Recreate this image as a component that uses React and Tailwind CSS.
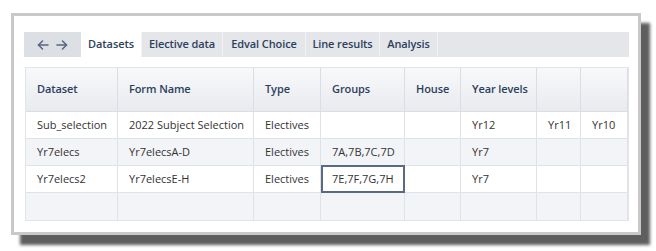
import React from "react";

const font = { fontFamily: '"Open Sans", "Noto Sans", sans-serif' };

const cols = ["Dataset", "Form Name", "Type", "Groups", "House", "Year levels", "", "", ""];
const rows = [
  ["Sub_selection", "2022 Subject Selection", "Electives", "", "", "Yr12", "Yr11", "Yr10", ""],
  ["Yr7elecs", "Yr7elecsA-D", "Electives", "7A,7B,7C,7D", "", "Yr7", "", "", ""],
  ["Yr7elecs2", "Yr7elecsE-H", "Electives", "7E,7F,7G,7H", "", "Yr7", "", "", ""],
  ["", "", "", "", "", "", "", "", ""],
];
const rowBg = ["bg-white", "bg-[#f3f4f7]", "bg-white", "bg-[#f3f4f7]"];

function Arrow({ dir }) {
  return (
    <svg width="12" height="10" viewBox="0 0 12 10" fill="none" stroke="#56657f" strokeWidth="1.5" strokeLinecap="round" strokeLinejoin="round">
      {dir === "left" ? (
        <>
          <path d="M11 5H1.5" />
          <path d="M5.5 1L1.5 5l4 4" />
        </>
      ) : (
        <>
          <path d="M1 5h9.5" />
          <path d="M6.5 1l4 4-4 4" />
        </>
      )}
    </svg>
  );
}

export default function App() {
  const tabs = [
    ["Datasets", "w-[61px]", true],
    ["Elective data", "w-[81px]", false],
    ["Edval Choice", "w-[83px]", false],
    ["Line results", "w-[74px]", false],
    ["Analysis", "w-[58px]", false],
  ];
  return (
    <div className="w-[656px] h-[251px] bg-white pl-[11px] pt-[13px]" style={font}>
      <div className="w-[630px] h-[222px] border-[3px] border-[#c9c9c9] bg-white shadow-[9px_10px_3px_rgba(40,40,40,0.75)] pl-[10px] pr-[9px] pt-[16px]">
        <div className="flex h-[25px] bg-[#e4e6ea]">
          <div className="w-[57px] bg-[#dcdfe4] flex items-center justify-center gap-[7px] pt-[1px]">
            <Arrow dir="left" />
            <Arrow dir="right" />
          </div>
          {tabs.map(([t, w, active]) => (
            <div
              key={t}
              className={`${w} flex items-center justify-center text-[11px] tracking-[-0.1px] font-semibold text-[#2e3f5c] border-r border-[#f0f1f4] ${active ? "bg-white" : ""}`}
            >
              {t}
            </div>
          ))}
        </div>
        <div className="mt-[10px] ml-[1px] border border-[#e2e5ea] w-[604px]">
          <div className="grid grid-cols-[92px_136px_67px_84px_56px_76px_44px_47px_1px] h-[44px] bg-gradient-to-b from-[#f8f9fb] to-[#e8eaee] border-b border-[#dadde3]">
            {cols.map((c, i) => (
              <div key={i} className="flex items-center pl-[11px] text-[11px] tracking-[-0.1px] font-semibold text-[#2e3f5c] border-r border-[#dadde3] last:border-r-0">
                {c}
              </div>
            ))}
          </div>
          {rows.map((r, ri) => (
            <div
              key={ri}
              className={`grid grid-cols-[92px_136px_67px_84px_56px_76px_44px_47px_1px] h-[27px] ${rowBg[ri]} ${ri < 3 ? "border-b border-[#dfe2e7]" : ""}`}
            >
              {r.map((c, ci) => {
                const sel = ri === 2 && ci === 3;
                return (
                  <div
                    key={ci}
                    className={`flex items-center text-[11px] text-[#333] whitespace-nowrap ${sel ? "border-2 border-[#5a6a86] pl-[9px] -mt-px -mb-px" : "pl-[11px] border-r border-[#dfe2e7] last:border-r-0"}`}
                  >
                    {c}
                  </div>
                );
              })}
            </div>
          ))}
        </div>
      </div>
    </div>
  );
}
